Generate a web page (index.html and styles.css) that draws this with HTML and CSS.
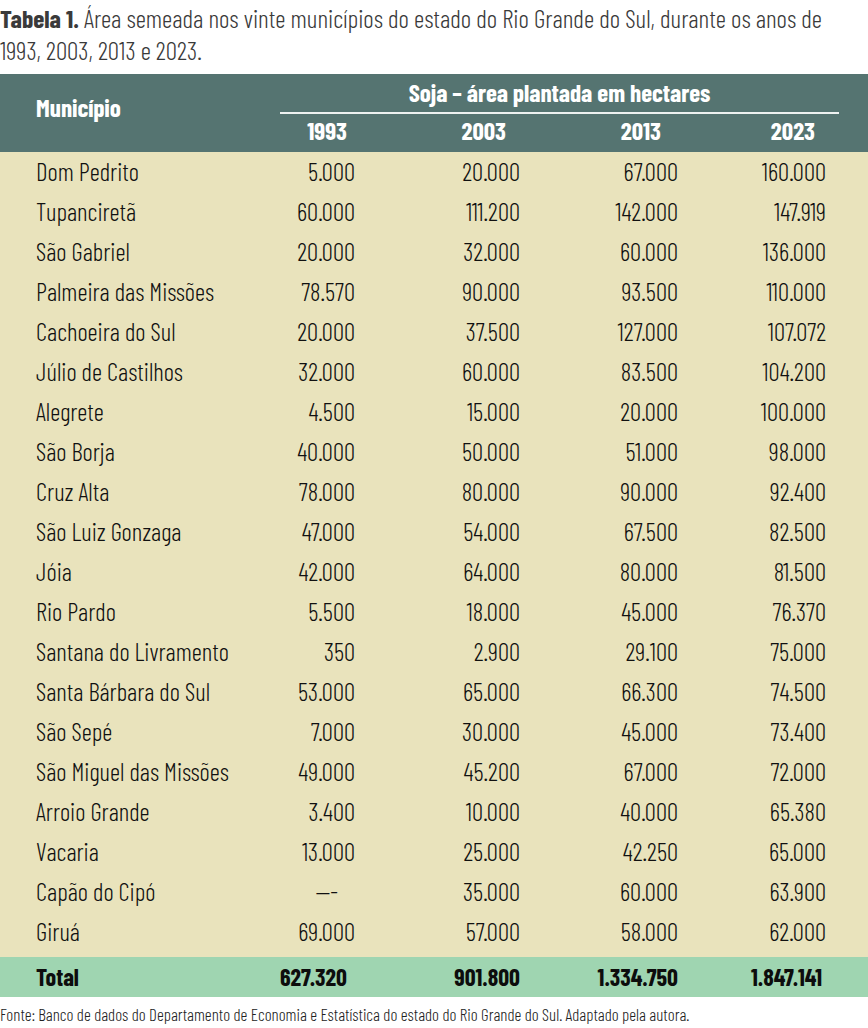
FILE: index.html
```html
<!DOCTYPE html>
<html lang="pt-BR">
<head>
<meta charset="utf-8">
<title>Tabela 1</title>
<link rel="stylesheet" href="styles.css">
</head>
<body>
<p class="caption"><b>Tabela 1.</b> Área semeada nos vinte municípios do estado do Rio Grande do Sul, durante os anos de 1993, 2003, 2013 e 2023.</p>

<div class="table">
  <div class="thead">
    <div class="th-name">Município</div>
    <div class="th-group">Soja – área plantada em hectares</div>
    <div class="th-year y1">1993</div>
    <div class="th-year y2">2003</div>
    <div class="th-year y3">2013</div>
    <div class="th-year y4">2023</div>
  </div>

  <div class="tbody">
    <div class="row"><span class="name">Dom Pedrito</span><span>5.000</span><span>20.000</span><span>67.000</span><span>160.000</span></div>
    <div class="row"><span class="name">Tupanciretã</span><span>60.000</span><span>111.200</span><span>142.000</span><span>147.919</span></div>
    <div class="row"><span class="name">São Gabriel</span><span>20.000</span><span>32.000</span><span>60.000</span><span>136.000</span></div>
    <div class="row"><span class="name">Palmeira das Missões</span><span>78.570</span><span>90.000</span><span>93.500</span><span>110.000</span></div>
    <div class="row"><span class="name">Cachoeira do Sul</span><span>20.000</span><span>37.500</span><span>127.000</span><span>107.072</span></div>
    <div class="row"><span class="name">Júlio de Castilhos</span><span>32.000</span><span>60.000</span><span>83.500</span><span>104.200</span></div>
    <div class="row"><span class="name">Alegrete</span><span>4.500</span><span>15.000</span><span>20.000</span><span>100.000</span></div>
    <div class="row"><span class="name">São Borja</span><span>40.000</span><span>50.000</span><span>51.000</span><span>98.000</span></div>
    <div class="row"><span class="name">Cruz Alta</span><span>78.000</span><span>80.000</span><span>90.000</span><span>92.400</span></div>
    <div class="row"><span class="name">São Luiz Gonzaga</span><span>47.000</span><span>54.000</span><span>67.500</span><span>82.500</span></div>
    <div class="row"><span class="name">Jóia</span><span>42.000</span><span>64.000</span><span>80.000</span><span>81.500</span></div>
    <div class="row"><span class="name">Rio Pardo</span><span>5.500</span><span>18.000</span><span>45.000</span><span>76.370</span></div>
    <div class="row"><span class="name">Santana do Livramento</span><span>350</span><span>2.900</span><span>29.100</span><span>75.000</span></div>
    <div class="row"><span class="name">Santa Bárbara do Sul</span><span>53.000</span><span>65.000</span><span>66.300</span><span>74.500</span></div>
    <div class="row"><span class="name">São Sepé</span><span>7.000</span><span>30.000</span><span>45.000</span><span>73.400</span></div>
    <div class="row"><span class="name">São Miguel das Missões</span><span>49.000</span><span>45.200</span><span>67.000</span><span>72.000</span></div>
    <div class="row"><span class="name">Arroio Grande</span><span>3.400</span><span>10.000</span><span>40.000</span><span>65.380</span></div>
    <div class="row"><span class="name">Vacaria</span><span>13.000</span><span>25.000</span><span>42.250</span><span>65.000</span></div>
    <div class="row"><span class="name">Capão do Cipó</span><span class="nodata">—-</span><span>35.000</span><span>60.000</span><span>63.900</span></div>
    <div class="row"><span class="name">Giruá</span><span>69.000</span><span>57.000</span><span>58.000</span><span>62.000</span></div>
  </div>

  <div class="row total"><span class="name">Total</span><span class="t1">627.320</span><span>901.800</span><span>1.334.750</span><span class="t4">1.847.141</span></div>
</div>

<p class="source">Fonte: Banco de dados do Departamento de Economia e Estatística do estado do Rio Grande do Sul. Adaptado pela autora.</p>
</body>
</html>
```
FILE: styles.css
```css
* { box-sizing: border-box; }

body {
  margin: 0;
  background: #ffffff;
  font-family: "Barlow Condensed", "Liberation Sans Narrow", sans-serif;
  color: #111111;
}

.caption {
  margin: 2px 0 0;
  max-width: 840px;
  font-size: 25.4px;
  line-height: 32px;
  font-weight: 300;
  color: #3a3a3a;
}

.caption b {
  font-weight: 700;
}

.table {
  margin-top: 8px;
}

.thead {
  display: grid;
  grid-template-columns: 280px 75px 165px 158px 148px 42px;
  grid-template-rows: 40px 38px;
  background: #557471;
  color: #ffffff;
  font-weight: 700;
}

.th-name {
  grid-column: 1;
  grid-row: 1 / 3;
  padding: 18px 0 0 36px;
  font-size: 25px;
  line-height: 30px;
}

.th-group {
  grid-column: 2 / 7;
  grid-row: 1;
  margin-right: 29px;
  border-bottom: 2px solid #eef2f1;
  text-align: center;
  font-size: 25px;
  line-height: 36px;
  padding-bottom: 2px;
}

.th-year {
  grid-row: 2;
  text-align: right;
  font-size: 25px;
  line-height: 32px;
  padding-bottom: 6px;
}

.y1 { grid-column: 2; padding-right: 8px; }
.y2 { grid-column: 3; padding-right: 14px; }
.y3 { grid-column: 4; padding-right: 17px; }
.y4 { grid-column: 5; padding-right: 11px; }

.tbody {
  background: #e9e3bc;
  padding-bottom: 5px;
}

.row {
  display: grid;
  grid-template-columns: 280px 75px 165px 158px 148px 42px;
  height: 40px;
  font-size: 25px;
  line-height: 38px;
  font-weight: 300;
  color: #111111;
}

.row span {
  text-align: right;
  white-space: nowrap;
}

.row .name {
  text-align: left;
  padding-left: 36px;
}

.row .nodata {
  padding-right: 17px;
}

.total {
  background: #9fd5b1;
  font-size: 24px;
  line-height: 40px;
  font-weight: 700;
  color: #0d0d0d;
}

.total .t1 { padding-right: 11px; }
.total .t4 { padding-right: 4px; }

.source {
  margin: 0;
  padding-top: 7px;
  font-size: 17px;
  line-height: 20px;
  font-weight: 300;
  color: #222222;
}
```
